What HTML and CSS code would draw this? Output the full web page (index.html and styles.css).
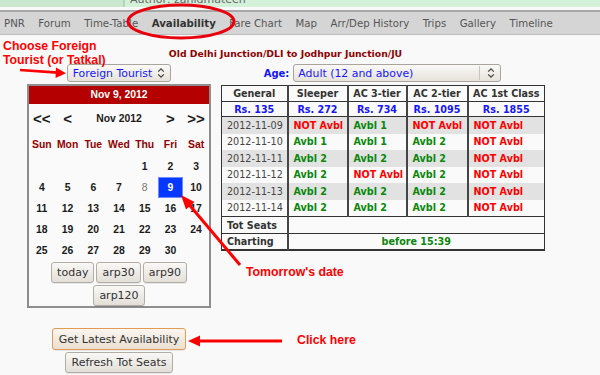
FILE: index.html
```html
<!DOCTYPE html>
<html lang="en">
<head>
    <meta charset="UTF-8">
    <meta name="viewport" content="width=device-width, initial-scale=1.0">
    <title>Seat Availability</title>
    <link rel="stylesheet" href="styles.css">
</head>
<body>
<div class="screen">
    <div class="top-strip">
        <div class="side"></div>
        <div class="author"><span>Author: zahidmateen</span></div>
    </div>

    <nav class="tabs">
        <span>PNR</span>
        <span>Forum</span>
        <span>Time-Table</span>
        <span class="on">Availability</span>
        <span>Fare Chart</span>
        <span>Map</span>
        <span>Arr/Dep History</span>
        <span>Trips</span>
        <span>Gallery</span>
        <span>Timeline</span>
    </nav>

    <div class="avail">
        <h3 class="route">Old Delhi Junction/DLI to Jodhpur Junction/JU</h3>

        <div class="cols">
            <div class="left">
                <div class="dd">
                    <span class="dd-text">Foreign Tourist</span>
                    <svg class="dd-arrow" width="8" height="12" viewBox="0 0 8 12"><path d="M1.2 4.6 4 1.8 6.8 4.6M1.2 7.4 4 10.2 6.8 7.4" fill="none" stroke="#444" stroke-width="1.3"/></svg>
                </div>

                <div class="cal">
                    <div class="cal-head">Nov 9, 2012</div>
                    <div class="cal-grid cal-nav">
                        <span>&lt;&lt;</span>
                        <span>&lt;</span>
                        <span class="month">Nov 2012</span>
                        <span>&gt;</span>
                        <span>&gt;&gt;</span>
                    </div>
                    <div class="cal-grid cal-days">
                        <span>Sun</span><span>Mon</span><span>Tue</span><span>Wed</span><span>Thu</span><span>Fri</span><span>Sat</span>
                    </div>
                    <div class="cal-grid cal-dates">
                        <span></span><span></span><span></span><span></span><span>1</span><span>2</span><span>3</span>
                        <span>4</span><span>5</span><span>6</span><span>7</span><span class="past">8</span><span class="sel">9</span><span>10</span>
                        <span>11</span><span>12</span><span>13</span><span>14</span><span>15</span><span>16</span><span>17</span>
                        <span>18</span><span>19</span><span>20</span><span>21</span><span>22</span><span>23</span><span>24</span>
                        <span>25</span><span>26</span><span>27</span><span>28</span><span>29</span><span>30</span><span></span>
                    </div>
                    <div class="cal-btns">
                        <button class="btn">today</button>
                        <button class="btn">arp30</button>
                        <button class="btn">arp90</button>
                        <button class="btn">arp120</button>
                    </div>
                </div>

                <div class="actions">
                    <button class="btn big focus">Get Latest Availability</button>
                    <button class="btn big">Refresh Tot Seats</button>
                </div>
            </div>

            <div class="right">
                <div class="age-row">
                    <span class="age-label">Age:</span>
                    <div class="dd wide">
                        <span class="dd-text">Adult (12 and above)</span>
                        <span class="dd-sep"></span>
                        <svg class="dd-arrow" width="8" height="12" viewBox="0 0 8 12"><path d="M1.2 4.6 4 1.8 6.8 4.6M1.2 7.4 4 10.2 6.8 7.4" fill="none" stroke="#444" stroke-width="1.3"/></svg>
                    </div>
                </div>

                <table class="avl">
                    <colgroup>
                        <col style="width:66px"><col style="width:60px"><col style="width:59px"><col style="width:61px"><col style="width:77px">
                    </colgroup>
                    <tr class="head">
                        <th>General</th><th>Sleeper</th><th>AC 3-tier</th><th>AC 2-tier</th><th>AC 1st Class</th>
                    </tr>
                    <tr class="fare">
                        <td>Rs. 135</td><td>Rs. 272</td><td>Rs. 734</td><td>Rs. 1095</td><td>Rs. 1855</td>
                    </tr>
                    <tr class="row odd">
                        <td class="date">2012-11-09</td><td class="no">NOT Avbl</td><td class="yes">Avbl 1</td><td class="no">NOT Avbl</td><td class="no">NOT Avbl</td>
                    </tr>
                    <tr class="row">
                        <td class="date">2012-11-10</td><td class="yes">Avbl 1</td><td class="yes">Avbl 1</td><td class="yes">Avbl 2</td><td class="no">NOT Avbl</td>
                    </tr>
                    <tr class="row odd">
                        <td class="date">2012-11-11</td><td class="yes">Avbl 2</td><td class="yes">Avbl 2</td><td class="yes">Avbl 2</td><td class="no">NOT Avbl</td>
                    </tr>
                    <tr class="row">
                        <td class="date">2012-11-12</td><td class="yes">Avbl 2</td><td class="no">NOT Avbl</td><td class="yes">Avbl 2</td><td class="no">NOT Avbl</td>
                    </tr>
                    <tr class="row odd">
                        <td class="date">2012-11-13</td><td class="yes">Avbl 2</td><td class="yes">Avbl 2</td><td class="yes">Avbl 2</td><td class="no">NOT Avbl</td>
                    </tr>
                    <tr class="row">
                        <td class="date">2012-11-14</td><td class="yes">Avbl 2</td><td class="yes">Avbl 2</td><td class="yes">Avbl 2</td><td class="no">NOT Avbl</td>
                    </tr>
                    <tr class="foot tot">
                        <th>Tot Seats</th><td colspan="4"></td>
                    </tr>
                    <tr class="foot">
                        <th>Charting</th><td colspan="4" class="yes chart">before 15:39</td>
                    </tr>
                </table>
            </div>
        </div>
    </div>

    <!-- annotations drawn over the screenshot -->
    <svg class="marks" width="600" height="375" viewBox="0 0 600 375">
        <ellipse cx="181" cy="21.5" rx="53" ry="16.5" fill="none" stroke="#e8000c" stroke-width="3"/>
        <line x1="20" y1="70" x2="58" y2="72.6" stroke="#f00" stroke-width="2.6"/>
        <polygon points="56,67.5 66,73.2 55.5,78" fill="#f00"/>
        <line x1="240" y1="265" x2="189" y2="204.5" stroke="#f00" stroke-width="3"/>
        <polygon points="181,195 194.5,202 186,209.5" fill="#f00"/>
        <line x1="282" y1="341" x2="198" y2="341" stroke="#f00" stroke-width="3"/>
        <polygon points="188,341 200,335.5 200,346.5" fill="#f00"/>
    </svg>
    <div class="note note-quota">Choose Foreign<br>Tourist (or Tatkal)</div>
    <div class="note note-date">Tomorrow's date</div>
    <div class="note note-click">Click here</div>
</div>
</body>
</html>
```

FILE: styles.css
```css
body {
    margin: 0;
    background-color: #f9f9f9;
    font-family: "DejaVu Sans", sans-serif;
}
.screen {
    position: relative;
    width: 600px;
    height: 375px;
    overflow: hidden;
}

/* green strip left over from the page above */
.top-strip {
    display: flex;
    height: 7px;
    overflow: hidden;
    margin-bottom: 3px;
    background-color: #c9e8cf;
}
.top-strip .side {
    width: 123px;
    border-right: 2px solid #b3d5b9;
}
.top-strip .author {
    flex: 1;
    padding-left: 5px;
    background-color: #d3f0d9;
    font-size: 11px;
    color: #666;
}
.top-strip .author span {
    display: block;
    margin-top: -7px;
}

.tabs {
    display: flex;
    align-items: center;
    gap: 13.5px;
    height: 22px;
    padding: 0 4px;
    background-color: #d5d5d5;
    border-top: 2px solid #a8a8a8;
    border-bottom: 1px solid #bcbcbc;
    font-size: 10.2px;
    color: #555;
}
.tabs .on {
    font-weight: bold;
    color: #333;
}

.avail {
    padding-top: 12px;
}
.route {
    width: 517px;
    margin: 0 0 3px 27px;
    text-align: center;
    font-size: 9.3px;
    line-height: 14px;
    color: #8f0000;
}
.cols {
    display: flex;
    gap: 10px;
    padding-left: 27px;
}
.left {
    width: 184px;
    display: flex;
    flex-direction: column;
    align-items: center;
}
.right {
    width: 323px;
}

/* fake select boxes */
.dd {
    display: flex;
    align-items: center;
    box-sizing: border-box;
    height: 18px;
    padding: 0 5px 0 5px;
    border: 1px solid #aaa59c;
    border-radius: 3px;
    background: linear-gradient(#fbfaf8, #e6e2db);
    font-size: 10.9px;
    color: #1515ff;
}
.dd-arrow {
    margin-left: 5px;
}
.dd.wide {
    width: 208px;
    padding-left: 4px;
}
.dd.wide .dd-text {
    flex: 1;
}
.dd-sep {
    width: 1px;
    height: 14px;
    background-color: #c9c4bb;
    margin-right: 2px;
}

.age-row {
    display: flex;
    justify-content: center;
    align-items: center;
    gap: 4px;
    margin-bottom: 3px;
}
.age-label {
    font-size: 10px;
    font-weight: bold;
    color: #1515ff;
}

/* calendar */
.cal {
    width: 180px;
    margin-top: 2px;
    border: 2px solid #8e8e8e;
    background-color: #fafafa;
    font-family: "Liberation Sans", Arial, sans-serif;
    font-weight: bold;
    font-size: 10.4px;
    color: #1a1a1a;
}
.cal-head {
    height: 18px;
    line-height: 18px;
    text-align: center;
    background-color: #b40000;
    color: #fff;
}
.cal-grid {
    display: grid;
    grid-template-columns: repeat(7, 1fr);
}
.cal-grid span {
    display: flex;
    align-items: center;
    justify-content: center;
}
.cal-nav span {
    height: 28px;
    font-size: 15px;
}
.cal-nav .month {
    grid-column: span 3;
    font-size: 10.4px;
}
.cal-days span {
    height: 24px;
    color: #930000;
}
.cal-dates span {
    height: 21px;
}
.cal-dates .past {
    color: #777;
    font-weight: normal;
}
.cal-dates .sel {
    box-sizing: border-box;
    background-color: #0638ff;
    border: 1px solid #6d8bff;
    color: #fff;
}
.cal-btns {
    display: flex;
    flex-wrap: wrap;
    justify-content: center;
    gap: 2px;
    padding-top: 1px;
}

.btn {
    box-sizing: border-box;
    height: 21px;
    padding: 0 5px;
    border: 1px solid #b3aea5;
    border-radius: 3px;
    background: linear-gradient(#f9f8f6, #e3dfd8);
    box-shadow: 0 1px 0 rgba(0,0,0,0.08);
    font-family: "DejaVu Sans", sans-serif;
    font-weight: normal;
    font-size: 11px;
    color: #333;
}
.actions {
    display: flex;
    flex-direction: column;
    align-items: center;
    gap: 2px;
    margin-top: 20px;
}
.btn.big {
    padding: 0 6px;
}
.btn.focus {
    height: 22px;
    border-color: #e29b55;
    background: linear-gradient(#fbf6ef, #eadfd1);
}

/* availability table */
.avl {
    width: 323px;
    table-layout: fixed;
    border-collapse: collapse;
    border: 1px solid #333;
    border-bottom-width: 2px;
    font-size: 9.6px;
    background-color: #fafafa;
}
.avl th,
.avl td {
    padding: 0 0 0 5px;
    border-left: 2px solid #454545;
    white-space: nowrap;
    overflow: hidden;
}
.avl tr > :first-child {
    border-left: none;
}
.avl .head th {
    height: 15px;
    padding: 0;
    text-align: center;
    color: #333;
    border-bottom: 1px solid #333;
}
.avl .fare td {
    height: 14px;
    padding: 0;
    text-align: center;
    font-weight: bold;
    color: #1515ff;
    border-bottom: 1px solid #333;
}
.avl .row td {
    height: 16.5px;
}
.avl .row.odd {
    background-color: #e2e2e2;
}
.avl .date {
    color: #444;
}
.avl .yes {
    font-weight: bold;
    color: #0a870a;
}
.avl .no {
    font-weight: bold;
    color: #ff0000;
}
.avl .foot th,
.avl .foot td {
    height: 15px;
    text-align: left;
    color: #333;
    border-top: 1px solid #333;
}
.avl .foot.tot th {
    height: 16px;
}
.avl .foot td.chart {
    padding: 0;
    text-align: center;
    color: #0a870a;
}

/* annotation layer */
.marks {
    position: absolute;
    left: 0;
    top: 0;
    pointer-events: none;
}
.note {
    position: absolute;
    font-family: "Liberation Sans", Arial, sans-serif;
    font-weight: bold;
    font-size: 12.3px;
    line-height: 14px;
    color: #ff0000;
}
.note-quota {
    left: 3px;
    top: 39px;
}
.note-date {
    left: 246px;
    top: 265px;
}
.note-click {
    left: 297px;
    top: 333px;
}
```
